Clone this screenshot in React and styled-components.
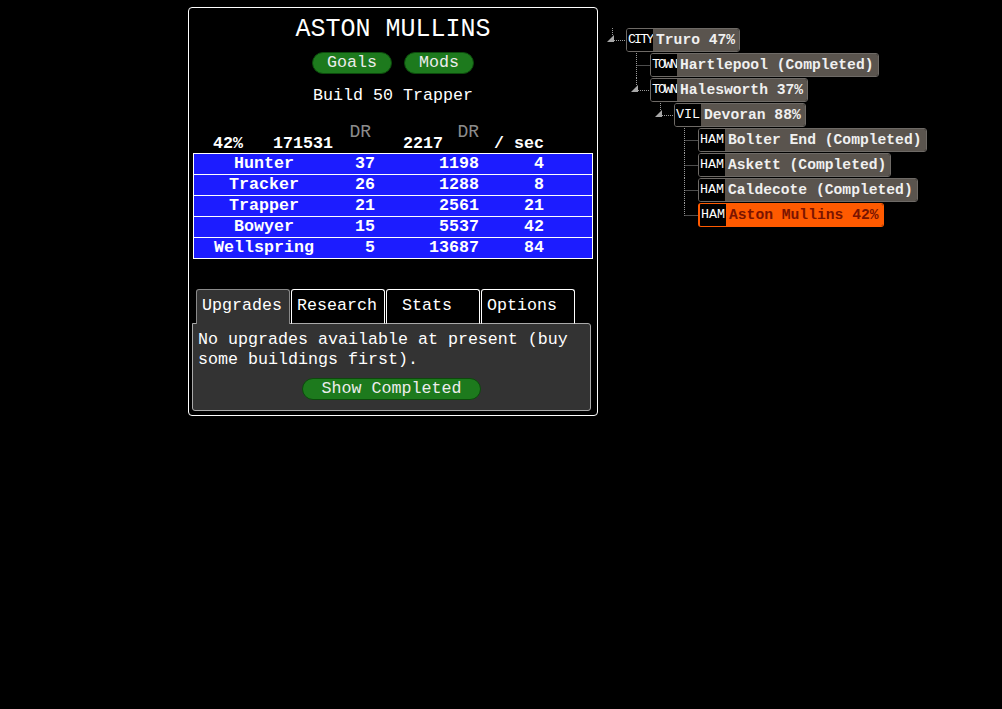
import styled, { createGlobalStyle } from "styled-components";

const GlobalStyle = createGlobalStyle`
  html, body {
    margin: 0;
    background: #000;
  }
  body {
    font-family: "Liberation Mono", "Courier New", monospace;
    color: #fff;
  }
`;

const Page = styled.div`
  display: flex;
  align-items: flex-start;
  padding: 7px 0 0 188px;
  min-height: 709px;
  box-sizing: border-box;
`;

const Panel = styled.div`
  width: 410px;
  height: 409px;
  box-sizing: border-box;
  border: 1px solid #fff;
  border-radius: 4px;
  padding: 0 4px 3px;
  display: flex;
  flex-direction: column;
`;

const Title = styled.h1`
  margin: 7px 0 0;
  font-size: 25px;
  line-height: 30px;
  font-weight: normal;
  text-align: center;
`;

const ButtonRow = styled.div`
  display: flex;
  justify-content: center;
  gap: 12px;
  margin-top: 7px;
`;

const PillButton = styled.button`
  font-family: inherit;
  font-size: 16.67px;
  line-height: 20px;
  color: #ececec;
  background: #1d7a1d;
  border: 1px solid #0c4a0c;
  border-radius: 11px;
  padding: 0 ${(p) => p.$pad || 14}px;
  margin: ${(p) => p.$top || 0}px 0 0;
  cursor: pointer;
`;

const Goal = styled.div`
  margin-top: 12px;
  font-size: 16.67px;
  line-height: 20px;
  text-align: center;
`;

const cols = "140px 41px 104px 65px 1fr";

const Header = styled.div`
  display: grid;
  grid-template-columns: 50px 90px 38px 72px 36px 65px 1fr;
  align-items: end;
  margin-top: 17px;
  font-size: 16.67px;
  line-height: 18px;
  font-weight: bold;
  text-align: right;
`;

const Unit = styled.span`
  padding-bottom: 12px;
  font-size: 18px;
  font-weight: normal;
  color: #8c8c8c;
`;

const Table = styled.div`
  border: 1px solid #fff;
  display: flex;
  flex-direction: column;
`;

const Row = styled.div`
  display: grid;
  grid-template-columns: ${cols};
  height: 20px;
  line-height: 20px;
  background: #1c1cff;
  font-size: 16.67px;
  font-weight: bold;
  & + & {
    border-top: 1px solid #fff;
  }
`;

const Cell = styled.span`
  text-align: ${(p) => (p.$center ? "center" : "right")};
  white-space: nowrap;
`;

const TabArea = styled.div`
  margin: 30px 2px 0 -1px;
  display: flex;
  flex-direction: column;
`;

const TabStrip = styled.div`
  display: flex;
  gap: 1px;
  padding-left: 4px;
  position: relative;
  z-index: 1;
  margin-bottom: -1px;
`;

const Tab = styled.div`
  width: 94px;
  height: 35px;
  box-sizing: border-box;
  padding: 0 5px;
  border: 1px solid ${(p) => (p.$active ? "#8a8a8a" : "#fff")};
  border-bottom: ${(p) => (p.$active ? "none" : "1px solid #aaa")};
  border-radius: 3px 3px 0 0;
  background: ${(p) => (p.$active ? "#333" : "#000")};
  font-size: 16.67px;
  line-height: 32px;
  white-space: pre;
`;

const TabBody = styled.div`
  height: 88px;
  box-sizing: border-box;
  background: #333;
  border: 1px solid #aaa;
  border-radius: 0 3px 3px 3px;
  padding: 6px 5px 0;
  font-size: 16.67px;
  line-height: 20px;
  display: flex;
  flex-direction: column;
  align-items: center;
`;

const Message = styled.p`
  margin: 0;
  align-self: stretch;
`;

const Tree = styled.div`
  margin: 21px 0 0 4px;
  display: flex;
  flex-direction: column;
`;

const TreeRow = styled.div`
  display: flex;
  height: 25px;
  padding-left: ${(p) => p.$depth * 24}px;
`;

const Node = styled.div`
  display: flex;
  height: 24px;
  box-sizing: border-box;
  border: 1px solid ${(p) => (p.$selected ? "#ff5a00" : "#6e6a66")};
  border-left-width: ${(p) => (p.$selected ? 2 : 1)}px;
  border-radius: 3px;
  overflow: hidden;
`;

const Kind = styled.span`
  width: 26px;
  flex-shrink: 0;
  box-sizing: border-box;
  padding-left: 1px;
  background: #000;
  color: #fff;
  font-size: 13.33px;
  letter-spacing: ${(p) => (p.$tight ? "-1.9px" : "0")};
  line-height: 22px;
  overflow: hidden;
  white-space: nowrap;
`;

const Name = styled.span`
  padding: 0 4px 0 3px;
  background: ${(p) => (p.$selected ? "#ff5a00" : "#5a544e")};
  color: ${(p) => (p.$selected ? "#7a1400" : "#f0f0f0")};
  font-size: 14.67px;
  font-weight: bold;
  line-height: 22px;
  white-space: nowrap;
`;

const Elbow = ({ last, open }) => (
  <svg width="24" height="25" style={{ flexShrink: 0 }}>
    <line
      x1="10.5"
      y1="0"
      x2="10.5"
      y2={last ? (open ? 8 : 12.5) : 25}
      stroke="#9a9a9a"
      strokeDasharray="1 1"
    />
    <line x1={open ? 12 : 10.5} y1="12.5" x2="24" y2="12.5" stroke="#9a9a9a" strokeDasharray="1 1" />
    {open && <polygon points="5,14 12,14 12,7" fill="#a8a8a8" />}
  </svg>
);

const buildings = [
  ["Hunter", 37, 1198, 4],
  ["Tracker", 26, 1288, 8],
  ["Trapper", 21, 2561, 21],
  ["Bowyer", 15, 5537, 42],
  ["Wellspring", 5, 13687, 84],
];

const places = [
  { depth: 0, kind: "CITY", name: "Truro 47%", last: true, open: true },
  { depth: 1, kind: "TOWN", name: "Hartlepool (Completed)" },
  { depth: 1, kind: "TOWN", name: "Halesworth 37%", last: true, open: true },
  { depth: 2, kind: "VIL", name: "Devoran 88%", last: true, open: true },
  { depth: 3, kind: "HAM", name: "Bolter End (Completed)" },
  { depth: 3, kind: "HAM", name: "Askett (Completed)" },
  { depth: 3, kind: "HAM", name: "Caldecote (Completed)" },
  { depth: 3, kind: "HAM", name: "Aston Mullins 42%", last: true, selected: true },
];

const tabs = ["Upgrades", "Research", " Stats", "Options"];

export default function App() {
  return (
    <Page>
      <GlobalStyle />
      <Panel>
        <Title>ASTON MULLINS</Title>
        <ButtonRow>
          <PillButton>Goals</PillButton>
          <PillButton>Mods</PillButton>
        </ButtonRow>
        <Goal>Build 50 Trapper</Goal>
        <Header>
          <span>42%</span>
          <span>171531</span>
          <Unit>DR</Unit>
          <span>2217</span>
          <Unit>DR</Unit>
          <span>/ sec</span>
        </Header>
        <Table>
          {buildings.map(([name, count, cost, rate]) => (
            <Row key={name}>
              <Cell $center>{name}</Cell>
              <Cell>{count}</Cell>
              <Cell>{cost}</Cell>
              <Cell>{rate}</Cell>
            </Row>
          ))}
        </Table>
        <TabArea>
          <TabStrip>
            {tabs.map((t, i) => (
              <Tab key={t} $active={i === 0}>
                {t}
              </Tab>
            ))}
          </TabStrip>
          <TabBody>
            <Message>
              No upgrades available at present (buy some buildings first).
            </Message>
            <PillButton $pad={19} $top={8}>
              Show Completed
            </PillButton>
          </TabBody>
        </TabArea>
      </Panel>
      <Tree>
        {places.map((p) => (
          <TreeRow key={p.name} $depth={p.depth}>
            <Elbow last={p.last} open={p.open} />
            <Node $selected={p.selected}>
              <Kind $tight={p.kind.length > 3}>{p.kind}</Kind>
              <Name $selected={p.selected}>{p.name}</Name>
            </Node>
          </TreeRow>
        ))}
      </Tree>
    </Page>
  );
}
